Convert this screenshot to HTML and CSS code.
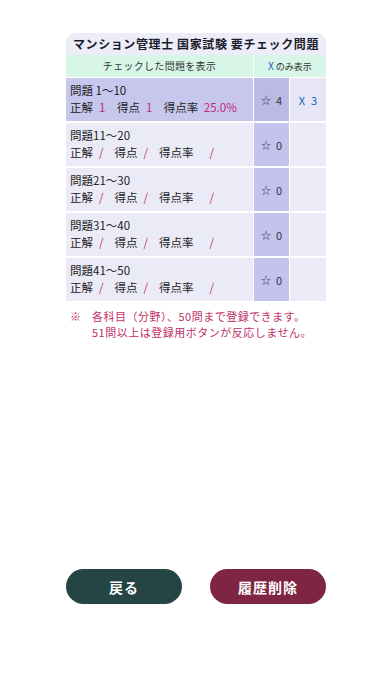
FILE: index.html
```html
<!DOCTYPE html>
<html lang="ja">
<head>
<meta charset="utf-8">
<link rel="stylesheet" href="styles.css">
</head>
<body>
<div class="page">
  <div class="panel">
    <div class="title">マンション管理士 国家試験 要チェック問題</div>
    <div class="head">
      <div class="head-left">チェックした問題を表示</div>
      <div class="head-right"><span class="x">X</span> のみ表示</div>
    </div>
    <div class="row row-active">
      <div class="cell-main">
        <div class="l1">問題 1〜10</div>
        <div class="l2"><span>正解</span><span class="num">1</span><span>得点</span><span class="num">1</span><span>得点率</span><span class="num">25.0%</span></div>
      </div>
      <div class="cell-star"><span class="star">☆</span><span>4</span></div>
      <div class="cell-x"><span class="xm">X</span><span>3</span></div>
    </div>
    <div class="row">
      <div class="cell-main">
        <div class="l1">問題11〜20</div>
        <div class="l2"><span>正解</span><span class="sl">/</span><span>得点</span><span class="sl">/</span><span>得点率</span><span class="sl sl-wide">/</span></div>
      </div>
      <div class="cell-star"><span class="star">☆</span><span>0</span></div>
      <div class="cell-x"></div>
    </div>
    <div class="row">
      <div class="cell-main">
        <div class="l1">問題21〜30</div>
        <div class="l2"><span>正解</span><span class="sl">/</span><span>得点</span><span class="sl">/</span><span>得点率</span><span class="sl sl-wide">/</span></div>
      </div>
      <div class="cell-star"><span class="star">☆</span><span>0</span></div>
      <div class="cell-x"></div>
    </div>
    <div class="row">
      <div class="cell-main">
        <div class="l1">問題31〜40</div>
        <div class="l2"><span>正解</span><span class="sl">/</span><span>得点</span><span class="sl">/</span><span>得点率</span><span class="sl sl-wide">/</span></div>
      </div>
      <div class="cell-star"><span class="star">☆</span><span>0</span></div>
      <div class="cell-x"></div>
    </div>
    <div class="row">
      <div class="cell-main">
        <div class="l1">問題41〜50</div>
        <div class="l2"><span>正解</span><span class="sl">/</span><span>得点</span><span class="sl">/</span><span>得点率</span><span class="sl sl-wide">/</span></div>
      </div>
      <div class="cell-star"><span class="star">☆</span><span>0</span></div>
      <div class="cell-x"></div>
    </div>
  </div>
  <div class="note">
    <span class="mark">※</span>
    <div class="note-text">
      <div>各科目（分野）、50問まで登録できます。</div>
      <div>51問以上は登録用ボタンが反応しません。</div>
    </div>
  </div>
  <div class="spacer"></div>
  <div class="buttons">
    <button class="btn btn-back">戻る</button>
    <button class="btn btn-del">履歴削除</button>
  </div>
</div>
</body>
</html>
```

FILE: styles.css
```css
html, body {
  margin: 0;
  padding: 0;
  background: #ffffff;
}
body {
  font-family: "Noto Sans CJK JP", "Noto Sans", sans-serif;
  color: #222222;
}
.page {
  width: 392px;
  height: 696px;
  display: flex;
  flex-direction: column;
  box-sizing: border-box;
  padding: 33px 66px 92px 66px;
}
.panel {
  display: flex;
  flex-direction: column;
  gap: 2px;
  border-radius: 10px 10px 0 0;
  overflow: hidden;
}
.title {
  background: #ededf9;
  height: 22px;
  line-height: 22px;
  text-align: center;
  font-size: 12px;
  font-weight: 700;
  letter-spacing: 0.6px;
  color: #1c1c2a;
  margin-bottom: -2px;
}
.head {
  display: grid;
  grid-template-columns: 187px 1fr;
  column-gap: 1px;
  height: 21px;
  background: #ffffff;
}
.head-left, .head-right {
  background: #d8f6e8;
  font-size: 10px;
  line-height: 21px;
  text-align: center;
  color: #333333;
  letter-spacing: 0.3px;
}
.head-right {
  font-size: 9px;
  letter-spacing: 0;
}
.x {
  color: #2060c0;
  font-size: 10px;
}
.row {
  display: grid;
  grid-template-columns: 187px 35px 1fr;
  column-gap: 1px;
  height: 43px;
}
.cell-main {
  background: #ebebf8;
  padding: 4px 0 0 4px;
  font-size: 11.5px;
  line-height: 17px;
  color: #222222;
  white-space: nowrap;
}
.cell-star {
  background: #c3c3ee;
  font-size: 11px;
  display: flex;
  align-items: center;
  justify-content: center;
  gap: 5px;
  color: #333344;
}
.star {
  font-size: 10px;
  color: #444455;
}
.cell-x {
  background: #ebebf8;
  font-size: 11px;
  display: flex;
  align-items: center;
  justify-content: center;
  gap: 6px;
  color: #2060c0;
}
.row-active .cell-main {
  background: #c7c7ed;
}
.row-active .cell-star {
  background: #babae4;
}
.row-active .cell-x {
  background: #e6e6f7;
}
.l2 {
  display: flex;
}
.num {
  color: #c0287a;
  margin: 0 11.5px 0 6px;
}
.num:last-child {
  margin-left: 5.5px;
}
.sl {
  color: #c0306a;
  margin: 0 11px 0 6px;
}
.sl-wide {
  margin-left: 16px;
}
.note {
  display: flex;
  margin-top: 7px;
  padding-left: 4px;
  color: #c0306a;
  font-size: 11px;
  line-height: 16px;
  letter-spacing: 0.5px;
}
.mark {
  width: 22px;
  flex: none;
}
.spacer {
  flex: 1;
}
.buttons {
  display: flex;
  justify-content: space-between;
}
.btn {
  width: 116px;
  height: 35px;
  border: none;
  border-radius: 18px;
  color: #ffffff;
  font-family: "Noto Sans CJK JP", "Noto Sans", sans-serif;
  font-size: 14px;
  font-weight: 700;
  letter-spacing: 1px;
  padding: 0;
}
.btn-back {
  background: #244543;
}
.btn-del {
  background: #7e2542;
}
```
